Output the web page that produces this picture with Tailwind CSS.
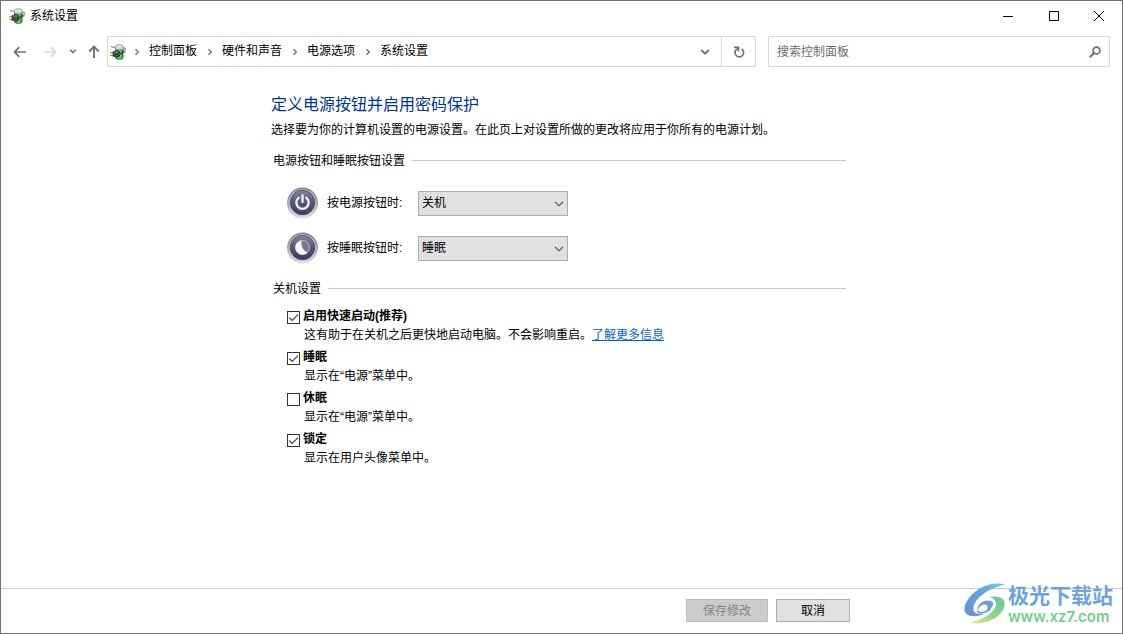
<!DOCTYPE html>
<html lang="zh-CN">
<head>
<meta charset="utf-8">
<meta name="viewport" content="width=device-width, initial-scale=1">
<title>系统设置</title>
<script src="https://cdn.jsdelivr.net/npm/@tailwindcss/browser@4"></script>
</head>
<body class="bg-white font-['Liberation_Sans','Noto_Sans_CJK_SC',sans-serif] text-xs text-black">
<svg class="absolute size-0" aria-hidden="true">
  <defs>
    <linearGradient id="cell" x1="0" x2="1"><stop offset="0" stop-color="#1e8a28"/><stop offset=".6" stop-color="#5fd85a"/><stop offset="1" stop-color="#1f8a2c"/></linearGradient>
    <linearGradient id="rim" x1="0" y1="0" x2="0" y2="1"><stop offset="0" stop-color="#808084"/><stop offset=".5" stop-color="#a9a9ad"/><stop offset="1" stop-color="#e2e2e4"/></linearGradient>
    <linearGradient id="face" x1="0" y1="0" x2="0" y2="1"><stop offset="0" stop-color="#85859f"/><stop offset=".5" stop-color="#56567a"/><stop offset="1" stop-color="#3c3c60"/></linearGradient>
    <linearGradient id="swooshA" x1="0" y1="1" x2="1" y2="0"><stop offset="0" stop-color="#6c8fd0"/><stop offset=".6" stop-color="#6aa2dc"/><stop offset="1" stop-color="#6fd0f4"/></linearGradient>
    <linearGradient id="swooshB" x1="0" y1="1" x2="1" y2="0"><stop offset="0" stop-color="#ecea8a"/><stop offset=".5" stop-color="#8fd28a"/><stop offset="1" stop-color="#62c9a0"/></linearGradient>
    <symbol id="power-plan" viewBox="0 0 16 16">
      <path d="M1 2.200 3 3.500 5.500 3" fill="none" stroke="#888" stroke-width="1.100"/>
      <path d="M12.500 4h2q1 0 .8 1.500L14.500 9" fill="none" stroke="#888" stroke-width="1.200"/>
      <path d="M5.500 4h7.700v9.500q0 2-3.800 2t-3.900-2z" fill="url(#cell)" stroke="#2d5a2d" stroke-width=".6"/>
      <path d="M5.300 5.200V2.500Q5.600.7 9.300.7t4 1.800v2.700Q9.300 6.700 5.300 5.200z" fill="#e2e8e2" stroke="#777" stroke-width=".7"/>
      <path d="M6.500 3.800Q9.300 5 12 3.800" fill="none" stroke="#a5b5a5" stroke-width=".7"/>
      <path d="M0 8.600h3M0 11.400h3" stroke="#b89a20" stroke-width="1.300"/>
      <path d="M3 7.500h1.500L6.500 6.600q3.500 0 3.500 3.300t-3.500 3.200L4.500 12.400H3z" fill="#484848" stroke="#222" stroke-width=".6"/>
      <path d="M9.800 9.800Q12 9.500 13.800 7" fill="none" stroke="#444" stroke-width="1.300"/>
      <path d="M4.500 8.700 6.500 8h1.500" fill="none" stroke="#aaa" stroke-width=".8"/>
    </symbol>
    <symbol id="crumb" viewBox="0 0 6 8"><path d="M1.500 1.200 4.300 4 1.500 6.800" fill="none" stroke="#767676" stroke-width="1.500"/></symbol>
    <symbol id="down" viewBox="0 0 10 6"><path d="M1 .8 5 4.800 9 .8" fill="none" stroke="currentColor" stroke-width="1.100"/></symbol>
    <symbol id="tick" viewBox="0 0 13 13"><path d="M2.300 6.500 5.200 9.400 11 3.600" fill="none" stroke="#444" stroke-width="1.200"/></symbol>
  </defs>
</svg>

<div class="relative flex min-h-screen flex-col border border-[#707070]">
  <header>
    <div class="flex h-[29px] items-center pl-2">
      <svg class="size-4"><use href="#power-plan"/></svg>
      <h1 class="ml-[5px]">系统设置</h1>
      <div class="ml-auto flex h-7">
        <button aria-label="最小化" class="grid w-[46px] place-items-center"><svg class="size-[10px]" viewBox="0 0 10 10"><path d="M0 5.500h10" stroke="#000"/></svg></button>
        <button aria-label="最大化" class="grid w-[45px] place-items-center"><svg class="size-[10px]" viewBox="0 0 10 10"><path d="M.5.5h9v9h-9z" fill="none" stroke="#000"/></svg></button>
        <button aria-label="关闭" class="grid w-[46px] place-items-center"><svg class="size-[10px]" viewBox="0 0 10 10"><path d="M0 0 10 10M10 0 0 10" stroke="#000"/></svg></button>
      </div>
    </div>

    <div class="mt-[6px] flex h-[31px] items-stretch pr-3">
      <nav aria-label="导航" class="flex w-[106px] shrink-0 items-center pl-3 text-[#707070]">
        <button aria-label="后退"><svg class="h-3 w-[14px]" viewBox="0 0 14 12"><path d="M1.500 6H13M6.300 1.200 1.500 6l4.800 4.800" fill="none" stroke="currentColor" stroke-width="1.700"/></svg></button>
        <button aria-label="前进" class="ml-4 text-[#d5d5d5]" disabled><svg class="h-3 w-[14px]" viewBox="0 0 14 12"><path d="M12.500 6H1M7.700 1.200 12.500 6l-4.800 4.800" fill="none" stroke="currentColor" stroke-width="1.700"/></svg></button>
        <button aria-label="最近位置" class="ml-3"><svg class="h-[5px] w-2" viewBox="0 0 8 5"><path d="M1.200.8 4 3.600 6.800.8" fill="none" stroke="currentColor" stroke-width="1.500"/></svg></button>
        <button aria-label="向上" class="ml-[11px]"><svg class="h-[14px] w-3" viewBox="0 0 12 14"><path d="M6 1.500V13M1.200 6.500 6 1.700l4.800 4.800" fill="none" stroke="currentColor" stroke-width="1.900"/></svg></button>
      </nav>
      <div class="flex flex-1 border border-[#d9d9d9]">
        <div class="flex flex-1 items-center pl-[2px]">
          <svg class="size-4"><use href="#power-plan"/></svg>
          <ol class="flex items-center pb-[2px]">
            <li class="flex items-center"><svg class="mx-2 mt-[2px] h-2 w-[6px]"><use href="#crumb"/></svg><a href="#" class="ml-[1px]">控制面板</a></li>
            <li class="flex items-center"><svg class="ml-[10px] mr-2 mt-[2px] h-2 w-[6px]"><use href="#crumb"/></svg><a href="#" class="ml-[1px]">硬件和声音</a></li>
            <li class="flex items-center"><svg class="ml-[10px] mr-2 mt-[2px] h-2 w-[6px]"><use href="#crumb"/></svg><a href="#" class="ml-[1px]">电源选项</a></li>
            <li class="flex items-center"><svg class="ml-[10px] mr-2 mt-[2px] h-2 w-[6px]"><use href="#crumb"/></svg><a href="#" class="ml-[1px]">系统设置</a></li>
          </ol>
          <button aria-label="以前的位置" class="ml-auto mr-[11px] text-[#707070]"><svg class="h-[6px] w-[10px]" viewBox="0 0 10 6"><path d="M1.200 1 5 4.700 8.800 1" fill="none" stroke="currentColor" stroke-width="1.800"/></svg></button>
        </div>
        <button aria-label="刷新" class="grid w-[34px] place-items-center border-l border-[#d9d9d9] text-[#707070]"><svg class="size-3" viewBox="0 0 12 12"><path d="M8.500 2.900A4.300 4.300 0 1 1 2.700 4.200L4.900 2.400" fill="none" stroke="currentColor" stroke-width="1.600"/><path d="M1 1.400H5.500V5.400" fill="none" stroke="currentColor" stroke-width="1.600"/></svg></button>
      </div>
      <label class="ml-3 flex w-[342px] items-center border border-[#d9d9d9] pl-2 pr-2">
        <input type="search" aria-label="搜索控制面板" placeholder="搜索控制面板" class="min-w-0 flex-1 outline-none placeholder:text-[#6d6d6d]">
        <svg class="size-3 text-[#707070]" viewBox="0 0 12 12"><circle cx="7.500" cy="4.500" r="3.400" fill="none" stroke="currentColor" stroke-width="1.700"/><path d="M5 7 .8 11.200" stroke="currentColor" stroke-width="2"/></svg>
      </label>
    </div>
  </header>

  <main class="flex-1 pl-[270px] pr-4 pt-7">
    <div class="max-w-[575px]">
      <h2 class="text-base leading-5 text-[#003399]">定义电源按钮并启用密码保护</h2>
      <p class="mt-[7px] leading-4">选择要为你的计算机设置的电源设置。在此页上对设置所做的更改将应用于你所有的电源计划。</p>

      <section class="pl-[2px]">
        <h3 class="mt-[15px] flex items-center gap-[7px] leading-4 after:-mt-px after:h-px after:flex-1 after:bg-[#cacaca]">电源按钮和睡眠按钮设置</h3>
        <div class="mt-[17px] flex flex-col gap-[11px] pl-3">
          <div class="flex h-[34px] items-center">
            <svg class="size-[34px]" viewBox="0 0 34 34"><circle cx="17.500" cy="17" r="15.500" fill="url(#rim)"/><circle cx="17.500" cy="16.500" r="13.300" fill="#c9c9cf"/><circle cx="17.500" cy="16.500" r="12.200" fill="url(#face)" stroke="#44445f" stroke-width=".8"/><path d="M13.600 11.800a6.200 6.200 0 1 0 7.800 0" fill="none" stroke="#f4f4f8" stroke-width="2.300" stroke-linecap="round"/><path d="M17.500 9.500v6.500" stroke="#f4f4f8" stroke-width="2.300" stroke-linecap="round"/></svg>
            <label for="power" class="ml-2 w-[91px]">按电源按钮时:</label>
            <div class="relative">
              <select id="power" class="block h-[25px] w-[150px] appearance-none border border-[#adadad] bg-[#e1e1e1] pl-[3px]"><option>关机</option><option>睡眠</option><option>休眠</option></select>
              <svg class="pointer-events-none absolute right-1 top-[10px] h-[6px] w-[10px] text-[#444]"><use href="#down"/></svg>
            </div>
          </div>
          <div class="flex h-[34px] items-center">
            <svg class="size-[34px]" viewBox="0 0 34 34"><circle cx="17.500" cy="17" r="15.500" fill="url(#rim)"/><circle cx="17.500" cy="16.500" r="13.300" fill="#c9c9cf"/><circle cx="17.500" cy="16.500" r="12.200" fill="url(#face)" stroke="#44445f" stroke-width=".8"/><circle cx="17.500" cy="16.500" r="7" fill="#77778f" stroke="#c4c4d2" stroke-width=".9"/><path d="M16.500 9.500a7.100 7.100 0 1 0 6.200 11.900C18.500 20 15.500 15 16.500 9.500z" fill="#f8f8fb"/></svg>
            <label for="sleepbtn" class="ml-2 w-[91px]">按睡眠按钮时:</label>
            <div class="relative">
              <select id="sleepbtn" class="block h-[25px] w-[150px] appearance-none border border-[#adadad] bg-[#e1e1e1] pl-[3px]"><option>睡眠</option><option>休眠</option><option>关机</option></select>
              <svg class="pointer-events-none absolute right-1 top-[10px] h-[6px] w-[10px] text-[#444]"><use href="#down"/></svg>
            </div>
          </div>
        </div>
      </section>

      <section class="pl-[2px]">
        <h3 class="mt-4 flex items-center gap-[7px] leading-4 after:-mt-px after:h-px after:flex-1 after:bg-[#cacaca]">关机设置</h3>
        <ul class="mt-[10px] flex flex-col gap-[3px] pl-[14px]">
          <li class="grid grid-cols-[13px_1fr] gap-x-[3px] leading-[19px]">
            <span class="relative mt-[4px] size-[13px]"><input id="fast" type="checkbox" checked class="peer block size-[13px] appearance-none border border-[#333] bg-white"><svg class="pointer-events-none absolute inset-0 hidden size-[13px] peer-checked:block"><use href="#tick"/></svg></span>
            <label for="fast" class="font-bold">启用快速启动(推荐)</label>
            <p class="col-start-2 pl-[1px]">这有助于在关机之后更快地启动电脑。不会影响重启。<a href="#" class="text-[#0066cc] underline">了解更多信息</a></p>
          </li>
          <li class="grid grid-cols-[13px_1fr] gap-x-[3px] leading-[19px]">
            <span class="relative mt-[4px] size-[13px]"><input id="sleep" type="checkbox" checked class="peer block size-[13px] appearance-none border border-[#333] bg-white"><svg class="pointer-events-none absolute inset-0 hidden size-[13px] peer-checked:block"><use href="#tick"/></svg></span>
            <label for="sleep" class="font-bold">睡眠</label>
            <p class="col-start-2 pl-[1px]">显示在“电源”菜单中。</p>
          </li>
          <li class="grid grid-cols-[13px_1fr] gap-x-[3px] leading-[19px]">
            <span class="relative mt-[4px] size-[13px]"><input id="hibernate" type="checkbox" class="peer block size-[13px] appearance-none border border-[#333] bg-white"><svg class="pointer-events-none absolute inset-0 hidden size-[13px] peer-checked:block"><use href="#tick"/></svg></span>
            <label for="hibernate" class="font-bold">休眠</label>
            <p class="col-start-2 pl-[1px]">显示在“电源”菜单中。</p>
          </li>
          <li class="grid grid-cols-[13px_1fr] gap-x-[3px] leading-[19px]">
            <span class="relative mt-[4px] size-[13px]"><input id="lock" type="checkbox" checked class="peer block size-[13px] appearance-none border border-[#333] bg-white"><svg class="pointer-events-none absolute inset-0 hidden size-[13px] peer-checked:block"><use href="#tick"/></svg></span>
            <label for="lock" class="font-bold">锁定</label>
            <p class="col-start-2 pl-[1px]">显示在用户头像菜单中。</p>
          </li>
        </ul>
      </section>
    </div>
  </main>

  <footer class="h-[45px] border-t border-[#cacaca] pl-[270px] pt-[10px]">
    <div class="flex max-w-[579px] justify-end gap-2">
      <button disabled class="h-[23px] w-[82px] border border-[#bfbfbf] bg-[#cccccc] text-[#838383]">保存修改</button>
      <button class="h-[23px] w-[74px] border border-[#adadad] bg-[#e1e1e1]">取消</button>
    </div>
  </footer>

  <!-- Site badge floating over the window corner -->
  <div class="absolute bottom-0 right-[9px] flex h-[50px] items-start gap-[2px]">
    <svg class="h-[42px] w-[42px]" viewBox="0 0 42 42">
      <path d="M41.500 1.500C30-1.500 15 2 5 15-2 24-1 32 8 33c5 .5 9-.5 12-2-7 .5-11-1-10.500-6C10 16 24 5 41.500 1.500z" fill="url(#swooshA)"/>
      <path d="M13.500 28C12 21 21 15.500 27 18c4.500 2 1.500 8-5 10 2.500-3.500 2-6.500-1.500-6.500-3 0-5.500 2.500-7 6.500z" fill="#6c9fdc"/>
      <path d="M13.500 28c2 3 8 2 13-2" fill="none" stroke="#6c9fdc" stroke-width="2"/>
      <path d="M25 14C36 12 42 16 40.500 23 38 34 22 43 4 39.500 17 38 28 31 31.500 24c2-5-1-8.500-6.500-10z" fill="url(#swooshB)"/>
    </svg>
    <div class="whitespace-nowrap">
      <div class="text-[21px] font-bold leading-[25px] text-[#6ba3dc]">极光下载站</div>
      <div class="font-[Inter,sans-serif] text-[15px] font-semibold leading-[18px] text-[#6fcf8a]">www.xz7.com</div>
    </div>
  </div>
</div>
</body>
</html>
